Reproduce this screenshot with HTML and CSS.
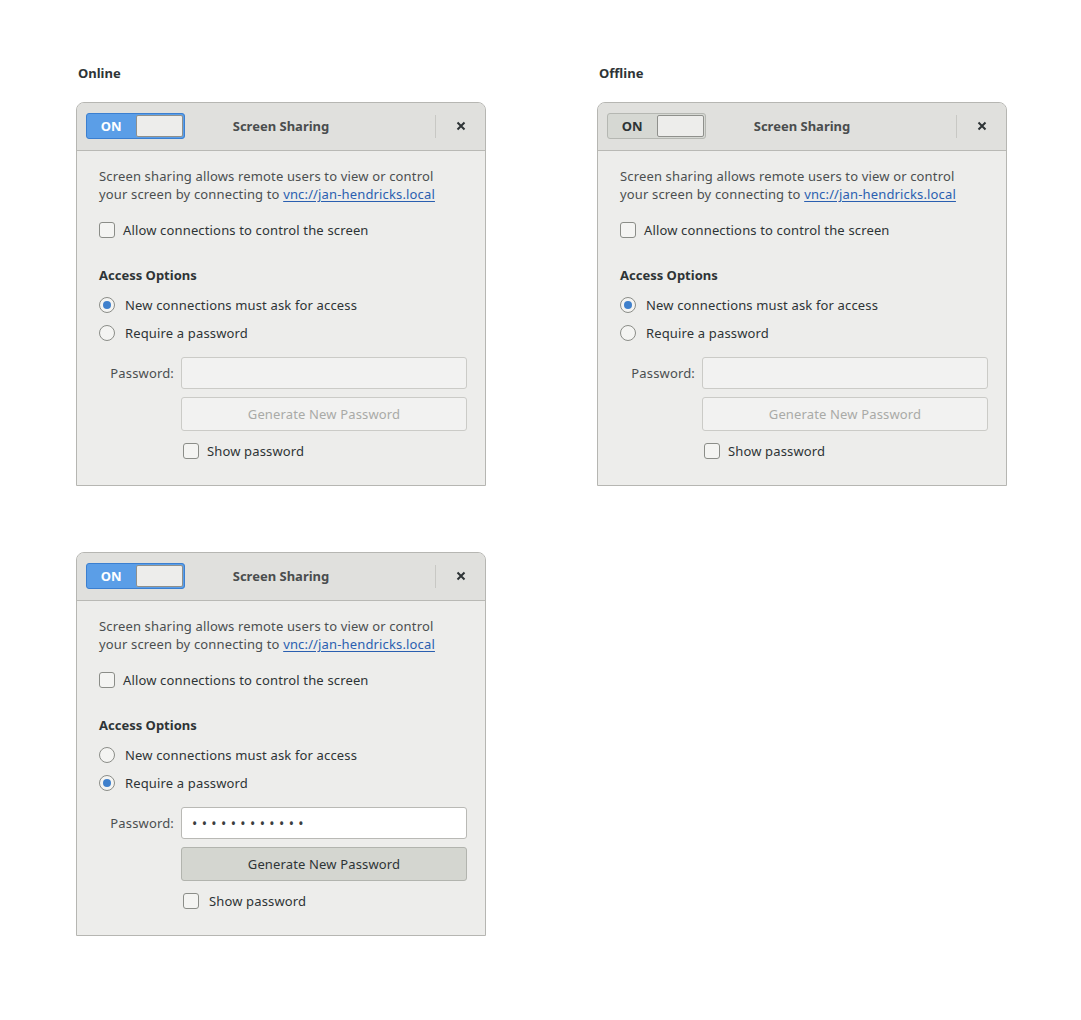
FILE: index.html
```html
<!DOCTYPE html>
<html>
<head>
<meta charset="utf-8">
<link rel="stylesheet" href="styles.css">
</head>
<body>
<div class="page">
  <section class="cell">
    <div class="caption">Online</div>
    <div class="window">
      <div class="header">
        <div class="switch on"><span class="sw-label">ON</span><span class="knob"></span></div>
        <div class="title">Screen Sharing</div>
        <div class="hright"><span class="sep"></span><span class="close"><svg width="10" height="10" viewBox="0 0 10 10"><path d="M1.5 1.5 L8.5 8.5 M8.5 1.5 L1.5 8.5" stroke="#2e3436" stroke-width="2" stroke-linecap="butt"/></svg></span></div>
      </div>
      <div class="body">
        <p class="desc">Screen sharing allows remote users to view or control<br>your screen by connecting to <a class="link">vnc://jan-hendricks.local</a></p>
        <div class="check-row allow"><span class="check"></span><span>Allow connections to control the screen</span></div>
        <div class="section-title">Access Options</div>
        <div class="radios">
          <div class="radio-row"><span class="radio checked"></span><span>New connections must ask for access</span></div>
          <div class="radio-row"><span class="radio"></span><span>Require a password</span></div>
        </div>
        <div class="pw-grid">
          <div class="pw-label">Password:</div>
          <div class="entry disabled"></div>
          <div class="button disabled">Generate New Password</div>
          <div class="check-row show"><span class="check"></span><span>Show password</span></div>
        </div>
      </div>
    </div>
  </section>
  <section class="cell">
    <div class="caption">Offline</div>
    <div class="window">
      <div class="header">
        <div class="switch off"><span class="sw-label">ON</span><span class="knob"></span></div>
        <div class="title">Screen Sharing</div>
        <div class="hright"><span class="sep"></span><span class="close"><svg width="10" height="10" viewBox="0 0 10 10"><path d="M1.5 1.5 L8.5 8.5 M8.5 1.5 L1.5 8.5" stroke="#2e3436" stroke-width="2" stroke-linecap="butt"/></svg></span></div>
      </div>
      <div class="body">
        <p class="desc">Screen sharing allows remote users to view or control<br>your screen by connecting to <a class="link">vnc://jan-hendricks.local</a></p>
        <div class="check-row allow"><span class="check"></span><span>Allow connections to control the screen</span></div>
        <div class="section-title">Access Options</div>
        <div class="radios">
          <div class="radio-row"><span class="radio checked"></span><span>New connections must ask for access</span></div>
          <div class="radio-row"><span class="radio"></span><span>Require a password</span></div>
        </div>
        <div class="pw-grid">
          <div class="pw-label">Password:</div>
          <div class="entry disabled"></div>
          <div class="button disabled">Generate New Password</div>
          <div class="check-row show"><span class="check"></span><span>Show password</span></div>
        </div>
      </div>
    </div>
  </section>
  <section class="cell">
    <div class="window">
      <div class="header">
        <div class="switch on"><span class="sw-label">ON</span><span class="knob"></span></div>
        <div class="title">Screen Sharing</div>
        <div class="hright"><span class="sep"></span><span class="close"><svg width="10" height="10" viewBox="0 0 10 10"><path d="M1.5 1.5 L8.5 8.5 M8.5 1.5 L1.5 8.5" stroke="#2e3436" stroke-width="2" stroke-linecap="butt"/></svg></span></div>
      </div>
      <div class="body">
        <p class="desc">Screen sharing allows remote users to view or control<br>your screen by connecting to <a class="link">vnc://jan-hendricks.local</a></p>
        <div class="check-row allow"><span class="check"></span><span>Allow connections to control the screen</span></div>
        <div class="section-title">Access Options</div>
        <div class="radios">
          <div class="radio-row"><span class="radio"></span><span>New connections must ask for access</span></div>
          <div class="radio-row"><span class="radio checked"></span><span>Require a password</span></div>
        </div>
        <div class="pw-grid">
          <div class="pw-label">Password:</div>
          <div class="entry active"><span class="dots">••••••••••••</span></div>
          <div class="button active">Generate New Password</div>
          <div class="check-row show wide"><span class="check"></span><span>Show password</span></div>
        </div>
      </div>
    </div>
  </section>
</div>
</body>
</html>
```
FILE: styles.css
```css
* { box-sizing: border-box; }
html, body { margin: 0; padding: 0; background: #ffffff; }
body {
  font-family: "Noto Sans", "Open Sans", sans-serif;
  font-size: 13px;
  letter-spacing: 0.15px;
  color: #2e3436;
}
.page {
  padding: 64px 0 0 76px;
  display: grid;
  grid-template-columns: 410px 410px;
  column-gap: 111px;
  row-gap: 66px;
  align-items: end;
}
.caption {
  font-weight: bold;
  letter-spacing: 0;
  line-height: 18px;
  padding-left: 2px;
  margin-bottom: 20px;
}
.window {
  width: 410px;
  height: 384px;
  border: 1px solid #b6b6b2;
  border-radius: 8px 8px 0 0;
  background: #ededeb;
  display: flex;
  flex-direction: column;
}
.header {
  height: 48px;
  flex: none;
  background: #e0e0dd;
  border-bottom: 1px solid #b9b9b5;
  border-radius: 7px 7px 0 0;
  display: grid;
  grid-template-columns: 1fr auto 1fr;
  align-items: center;
}
.switch {
  margin-left: 9px;
  margin-bottom: 1px;
  width: 99px;
  height: 26px;
  border-radius: 3px;
  border: 1px solid #3b7fd0;
  background: #5b9ee7;
  display: flex;
  align-items: center;
  justify-content: space-between;
  padding: 1px;
}
.switch.off {
  background: #d6d8d3;
  border-color: #b5b7b2;
}
.sw-label {
  font-weight: bold;
  letter-spacing: 0;
  color: #ffffff;
  width: 49px;
  text-align: center;
  font-size: 13px;
  padding-right: 2px;
}
.switch.off .sw-label { color: #2e3436; }
.knob {
  width: 47px;
  height: 22px;
  background: #ededeb;
  border: 1px solid #8f908c;
  border-radius: 2px;
}
.title {
  font-weight: bold;
  letter-spacing: 0;
  color: #4a4d4e;
  text-align: center;
  margin-bottom: 2px;
}
.hright {
  display: flex;
  justify-content: flex-end;
  align-items: center;
  height: 100%;
}
.sep {
  width: 1px;
  height: 23px;
  background: #c8c8c4;
}
.close {
  width: 49px;
  display: flex;
  justify-content: center;
  align-items: center;
  margin-bottom: 1px;
}
.body {
  padding: 16px 18px 0 22px;
  display: flex;
  flex-direction: column;
}
.desc {
  margin: 0;
  line-height: 18px;
  color: #4b4f50;
}
.link {
  color: #2a5fb0;
  text-decoration: underline;
  text-underline-offset: 2px;
}
.check-row {
  display: flex;
  align-items: center;
  gap: 8px;
  height: 16px;
  line-height: 16px;
}
.allow { margin-top: 19px; }
.check {
  width: 16px;
  height: 16px;
  border: 1px solid #8b8d88;
  border-radius: 3px;
  background: #f4f4f2;
  flex: none;
}
.section-title {
  margin-top: 28px;
  font-weight: bold;
  letter-spacing: 0;
  line-height: 18px;
}
.radios { margin-top: 7px; }
.radio-row {
  display: flex;
  align-items: center;
  gap: 10px;
  height: 28px;
}
.radio {
  width: 16px;
  height: 16px;
  border-radius: 50%;
  border: 1px solid #8b8d88;
  background: #f4f4f2;
  flex: none;
  display: flex;
  align-items: center;
  justify-content: center;
}
.radio.checked::after {
  content: "";
  width: 8px;
  height: 8px;
  border-radius: 50%;
  background: #3f80cc;
}
.pw-grid {
  margin-top: 10px;
  display: grid;
  grid-template-columns: 75px 1fr;
  column-gap: 7px;
  align-items: center;
}
.pw-label {
  text-align: right;
  color: #4b4f50;
  grid-column: 1;
}
.entry {
  grid-column: 2;
  height: 32px;
  border-radius: 3px;
  border: 1px solid #cbcbc7;
  background: #f2f2f1;
  display: flex;
  align-items: center;
  padding-left: 10px;
}
.entry.active {
  background: #ffffff;
  border-color: #b9b9b5;
}
.dots {
  letter-spacing: 4.4px;
  font-size: 14px;
  color: #3a3d3e;
}
.button {
  grid-column: 2;
  margin-top: 8px;
  height: 34px;
  border-radius: 3px;
  border: 1px solid #cbcbc7;
  background: #f2f2f1;
  color: #a9aaa7;
  display: flex;
  align-items: center;
  justify-content: center;
}
.button.active {
  background: #d4d6d0;
  border-color: #b2b4ae;
  color: #2e3436;
}
.show {
  grid-column: 2;
  margin-top: 12px;
  margin-left: 2px;
}
.show.wide { gap: 10px; }
```
